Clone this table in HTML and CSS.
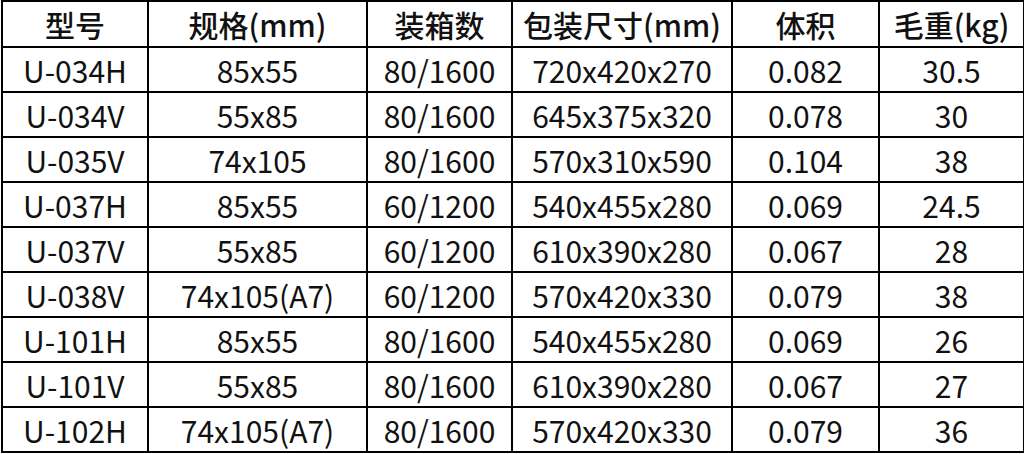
FILE: index.html
```html
<!DOCTYPE html>
<html>
<head>
<meta charset="utf-8">
<link rel="stylesheet" href="styles.css">
</head>
<body>
<table class="spec">
  <colgroup>
    <col class="c1"><col class="c2"><col class="c3"><col class="c4"><col class="c5"><col class="c6">
  </colgroup>
  <thead>
    <tr class="head"><th>型号</th><th>规格(mm)</th><th>装箱数</th><th>包装尺寸(mm)</th><th>体积</th><th>毛重(kg)</th></tr>
  </thead>
  <tbody>
    <tr><td>U-034H</td><td>85x55</td><td>80/1600</td><td>720x420x270</td><td>0.082</td><td>30.5</td></tr>
    <tr><td>U-034V</td><td>55x85</td><td>80/1600</td><td>645x375x320</td><td>0.078</td><td>30</td></tr>
    <tr><td>U-035V</td><td>74x105</td><td>80/1600</td><td>570x310x590</td><td>0.104</td><td>38</td></tr>
    <tr><td>U-037H</td><td>85x55</td><td>60/1200</td><td>540x455x280</td><td>0.069</td><td>24.5</td></tr>
    <tr><td>U-037V</td><td>55x85</td><td>60/1200</td><td>610x390x280</td><td>0.067</td><td>28</td></tr>
    <tr><td>U-038V</td><td>74x105(A7)</td><td>60/1200</td><td>570x420x330</td><td>0.079</td><td>38</td></tr>
    <tr><td>U-101H</td><td>85x55</td><td>80/1600</td><td>540x455x280</td><td>0.069</td><td>26</td></tr>
    <tr><td>U-101V</td><td>55x85</td><td>80/1600</td><td>610x390x280</td><td>0.067</td><td>27</td></tr>
    <tr><td>U-102H</td><td>74x105(A7)</td><td>80/1600</td><td>570x420x330</td><td>0.079</td><td>36</td></tr>
  </tbody>
</table>
</body>
</html>
```

FILE: styles.css
```css
html, body {
  margin: 0;
  padding: 0;
  background: #ffffff;
}
.spec {
  border-collapse: collapse;
  table-layout: fixed;
  width: 1022px;
  margin: 0 0 0 1px;
  font-family: "Noto Sans CJK SC", "Noto Sans", sans-serif;
  color: #111111;
}
.c1 { width: 146px; }
.c2 { width: 219px; }
.c3 { width: 145px; }
.c4 { width: 220px; }
.c5 { width: 147px; }
.c6 { width: 145px; }
.spec th, .spec td {
  border: 2px solid #000000;
  text-align: center;
  padding: 0;
  line-height: 1;
  overflow: hidden;
  white-space: nowrap;
}
.spec th {
  font-size: 30px;
  font-weight: 500;
  height: 44px;
}
.spec td {
  font-size: 30px;
  font-weight: 400;
  height: 43px;
}
```
